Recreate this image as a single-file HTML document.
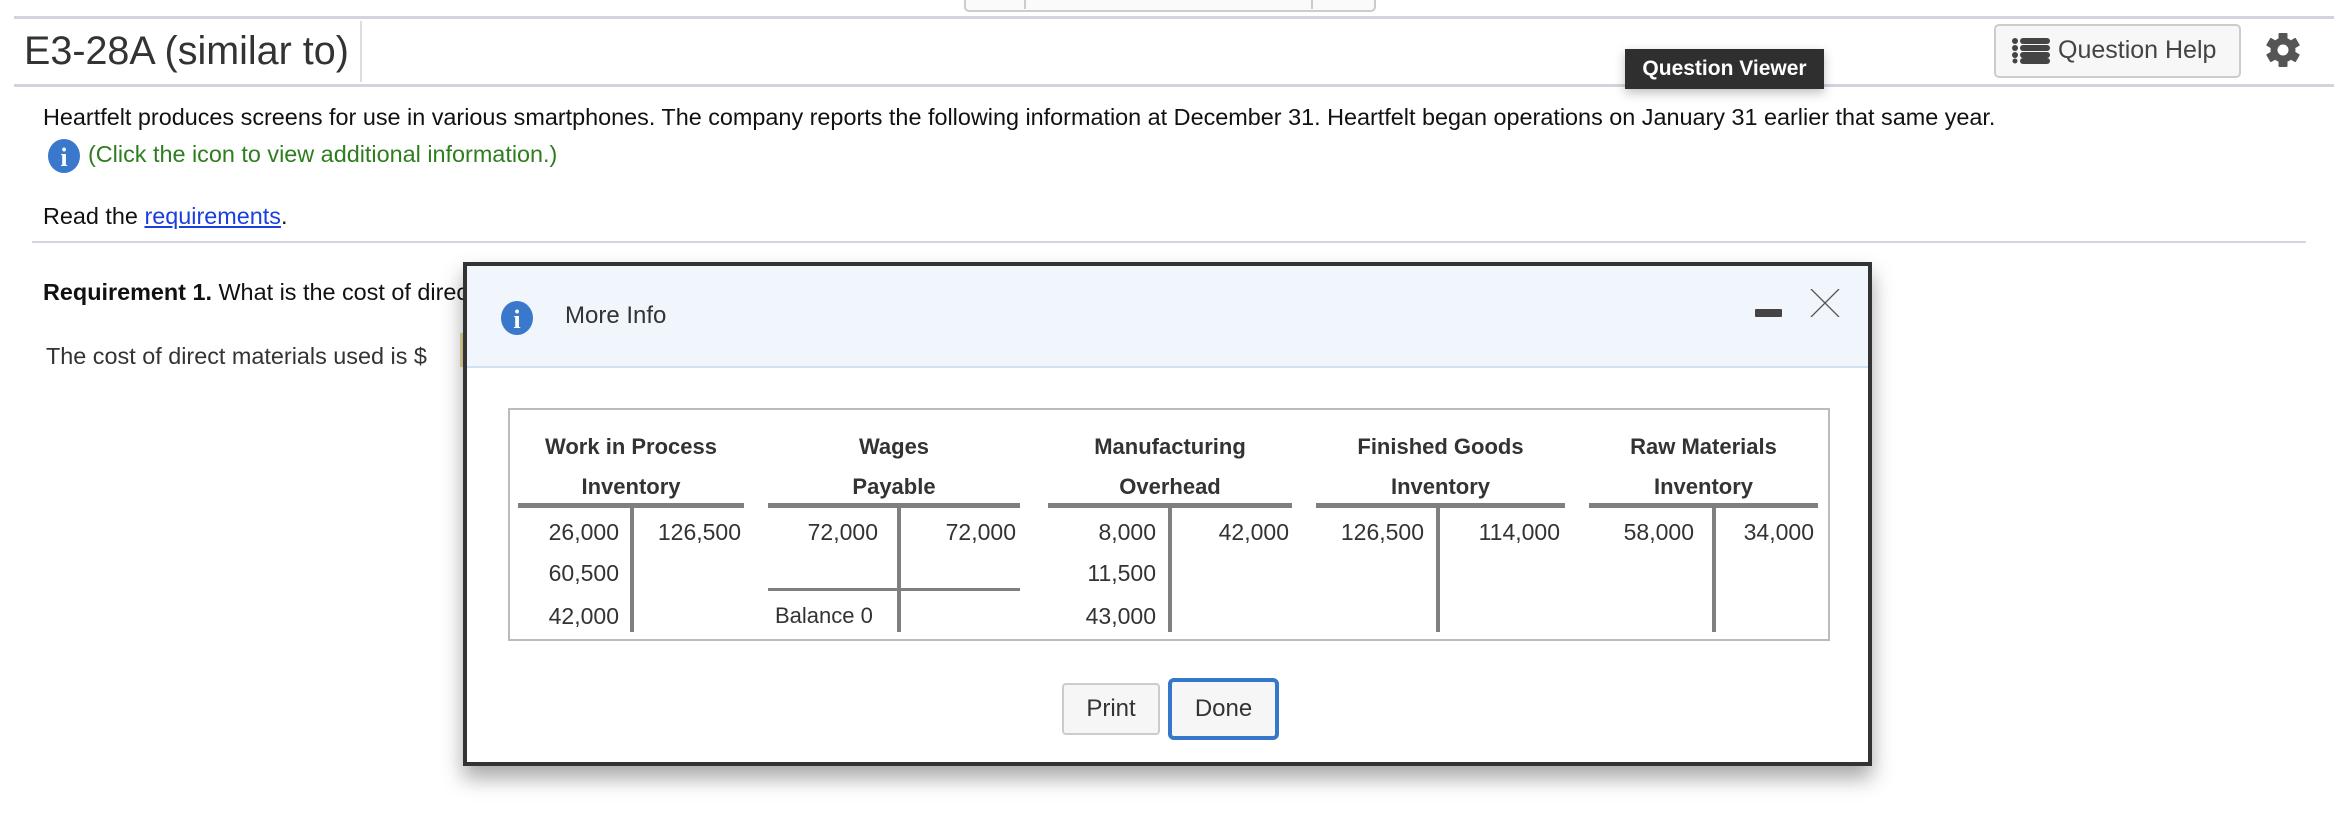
<!DOCTYPE html>
<html><head><meta charset="utf-8"><style>
body{margin:0;width:2334px;height:832px;background:#fff;position:relative;overflow:hidden;font-family:"Liberation Sans",Arial,sans-serif;color:#222}
.a{position:absolute;white-space:nowrap}
.hl{position:absolute;height:3px;background:#d2d5de}
.n{position:absolute;font-size:23px;color:#333;text-align:right;width:120px;line-height:26px}
.h{position:absolute;font-size:22px;font-weight:bold;color:#333;text-align:center;line-height:26px}
.bar{position:absolute;top:503px;height:5px;background:#7f7f7f}
.vl{position:absolute;top:505px;height:127px;width:4px;background:#7f7f7f}
</style></head><body>
<div class="a" style="left:964px;top:-4px;width:408px;height:12px;border:2px solid #ccc;border-radius:0 0 5px 5px;background:#fafafa"></div>
<div class="a" style="left:1024px;top:0;width:2px;height:9px;background:#ccc"></div>
<div class="a" style="left:1311px;top:0;width:2px;height:9px;background:#ccc"></div>
<div class="hl" style="left:14px;right:0;top:16px"></div>
<div class="hl" style="left:14px;right:0;top:84px"></div>
<div class="a" style="left:360px;top:21px;width:2px;height:61px;background:#ddd"></div>
<div class="a" style="left:24px;top:29px;font-size:39.5px;color:#333">E3-28A (similar to)</div>
<div class="a" style="left:1994px;top:24px;width:243px;height:50px;border:2px solid #ccc;border-radius:5px;background:#f7f7f7"></div>
<svg class="a" style="left:2012px;top:38px" width="40" height="26" viewBox="0 0 40 26" fill="#444"><circle cx="3" cy="3" r="3"/><circle cx="3" cy="10" r="3"/><circle cx="3" cy="17" r="3"/><circle cx="3" cy="23" r="2.5"/><rect x="8" y="0" width="30" height="6" rx="3"/><rect x="8" y="7" width="30" height="6" rx="3"/><rect x="8" y="14" width="30" height="6" rx="3"/><rect x="8" y="20" width="30" height="6" rx="3"/></svg>
<div class="a" style="left:2058px;top:36px;font-size:25px;color:#444">Question Help</div>
<svg class="a" style="left:2266px;top:32px" width="34" height="36" viewBox="0 0 34 36"><g fill="#555" transform="translate(17 18)"><rect x="-4.5" y="-17" width="9" height="34" rx="1"/><rect x="-4.5" y="-17" width="9" height="34" rx="1" transform="rotate(60)"/><rect x="-4.5" y="-17" width="9" height="34" rx="1" transform="rotate(120)"/><circle r="12.5"/></g><circle cx="17" cy="18" r="5.5" fill="#fff"/></svg>
<div class="a" style="left:1625px;top:49px;width:199px;height:40px;background:#2f2f2f;color:#fff;font-size:21px;line-height:40px;text-align:center;font-weight:bold;box-shadow:0 4px 10px rgba(0,0,0,.25)">Question Viewer</div>
<div class="a" style="left:43px;top:104px;font-size:23.4px;color:#111">Heartfelt produces screens for use in various smartphones. The company reports the following information at December 31. Heartfelt began operations on January 31 earlier that same year.</div>
<svg class="a" style="left:47px;top:138px" width="34" height="36" viewBox="0 0 34 36"><ellipse cx="17" cy="18" rx="16" ry="17" fill="#3a78cc"/><text x="17" y="28" text-anchor="middle" font-family="Liberation Serif,serif" font-weight="bold" font-size="26" fill="#fff">i</text></svg>
<div class="a" style="left:88px;top:141px;font-size:23.4px;color:#2e7d1e">(Click the icon to view additional information.)</div>
<div class="a" style="left:43px;top:203px;font-size:23.4px;color:#111">Read the <span style="color:#1a3fe0;text-decoration:underline">requirements</span>.</div>
<div class="hl" style="left:32px;width:2274px;top:241px;height:2px"></div>
<div class="a" style="left:43px;top:279px;font-size:23.4px;color:#111"><b>Requirement 1.</b> What is the cost of direc</div>
<div class="a" style="left:46px;top:343px;font-size:23.4px;color:#333">The cost of direct materials used is $</div>
<div class="a" style="left:460px;top:333px;width:3px;height:34px;background:#e8d9a0"></div>

<div class="a" style="left:463px;top:262px;width:1409px;height:504px;border:4px solid #333;box-sizing:border-box;background:#fff;box-shadow:0 12px 20px rgba(0,0,0,.35)"></div>
<div class="a" style="left:467px;top:266px;width:1401px;height:100px;background:#f1f5fc;border-bottom:2px solid #cfe0f3"></div>
<svg class="a" style="left:500px;top:300px" width="34" height="36" viewBox="0 0 34 36"><ellipse cx="17" cy="18" rx="16" ry="17" fill="#3a78cc"/><text x="17" y="28" text-anchor="middle" font-family="Liberation Serif,serif" font-weight="bold" font-size="26" fill="#fff">i</text></svg>
<div class="a" style="left:565px;top:302px;font-size:24px;color:#333">More Info</div>
<div class="a" style="left:1755px;top:309px;width:27px;height:8px;background:#444;border-radius:1px"></div>
<svg class="a" style="left:1810px;top:289px" width="30" height="28" viewBox="0 0 30 28"><path d="M1 0L29 28M29 0L1 28" stroke="#555" stroke-width="1.3"/></svg>

<div class="a" style="left:508px;top:408px;width:1322px;height:233px;border:2px solid #bbb;box-sizing:border-box"></div>
<div class="h" style="left:518px;width:226px;top:434px">Work in Process</div>
<div class="h" style="left:518px;width:226px;top:474px">Inventory</div>
<div class="h" style="left:768px;width:252px;top:434px">Wages</div>
<div class="h" style="left:768px;width:252px;top:474px">Payable</div>
<div class="h" style="left:1048px;width:244px;top:434px">Manufacturing</div>
<div class="h" style="left:1048px;width:244px;top:474px">Overhead</div>
<div class="h" style="left:1316px;width:249px;top:434px">Finished Goods</div>
<div class="h" style="left:1316px;width:249px;top:474px">Inventory</div>
<div class="h" style="left:1589px;width:229px;top:434px">Raw Materials</div>
<div class="h" style="left:1589px;width:229px;top:474px">Inventory</div>
<div class="bar" style="left:518px;width:226px"></div>
<div class="bar" style="left:768px;width:252px"></div>
<div class="bar" style="left:1048px;width:244px"></div>
<div class="bar" style="left:1316px;width:249px"></div>
<div class="bar" style="left:1589px;width:229px"></div>
<div class="vl" style="left:630px"></div>
<div class="vl" style="left:897px"></div>
<div class="vl" style="left:1168px"></div>
<div class="vl" style="left:1436px"></div>
<div class="vl" style="left:1712px"></div>
<div class="a" style="left:768px;width:252px;top:588px;height:3px;background:#7f7f7f"></div>

<div class="n" style="left:499px;top:519px">26,000</div>
<div class="n" style="left:621px;top:519px">126,500</div>
<div class="n" style="left:758px;top:519px">72,000</div>
<div class="n" style="left:896px;top:519px">72,000</div>
<div class="n" style="left:1036px;top:519px">8,000</div>
<div class="n" style="left:1169px;top:519px">42,000</div>
<div class="n" style="left:1304px;top:519px">126,500</div>
<div class="n" style="left:1440px;top:519px">114,000</div>
<div class="n" style="left:1574px;top:519px">58,000</div>
<div class="n" style="left:1694px;top:519px">34,000</div>
<div class="n" style="left:499px;top:560px">60,500</div>
<div class="n" style="left:1036px;top:560px">11,500</div>
<div class="n" style="left:499px;top:603px">42,000</div>
<div class="n" style="left:1036px;top:603px">43,000</div>
<div class="a" style="left:775px;top:603px;font-size:22px;color:#333;line-height:26px">Balance 0</div>

<div class="a" style="left:1062px;top:683px;width:98px;height:52px;border:2px solid #ccc;box-sizing:border-box;border-radius:4px;background:#f6f6f6;font-size:24px;color:#333;text-align:center;line-height:48px">Print</div>
<div class="a" style="left:1168px;top:678px;width:111px;height:62px;border:4px solid #3577c8;box-sizing:border-box;border-radius:6px;background:#f6f6f6;font-size:24px;color:#333;text-align:center;line-height:54px">Done</div>
</body></html>
